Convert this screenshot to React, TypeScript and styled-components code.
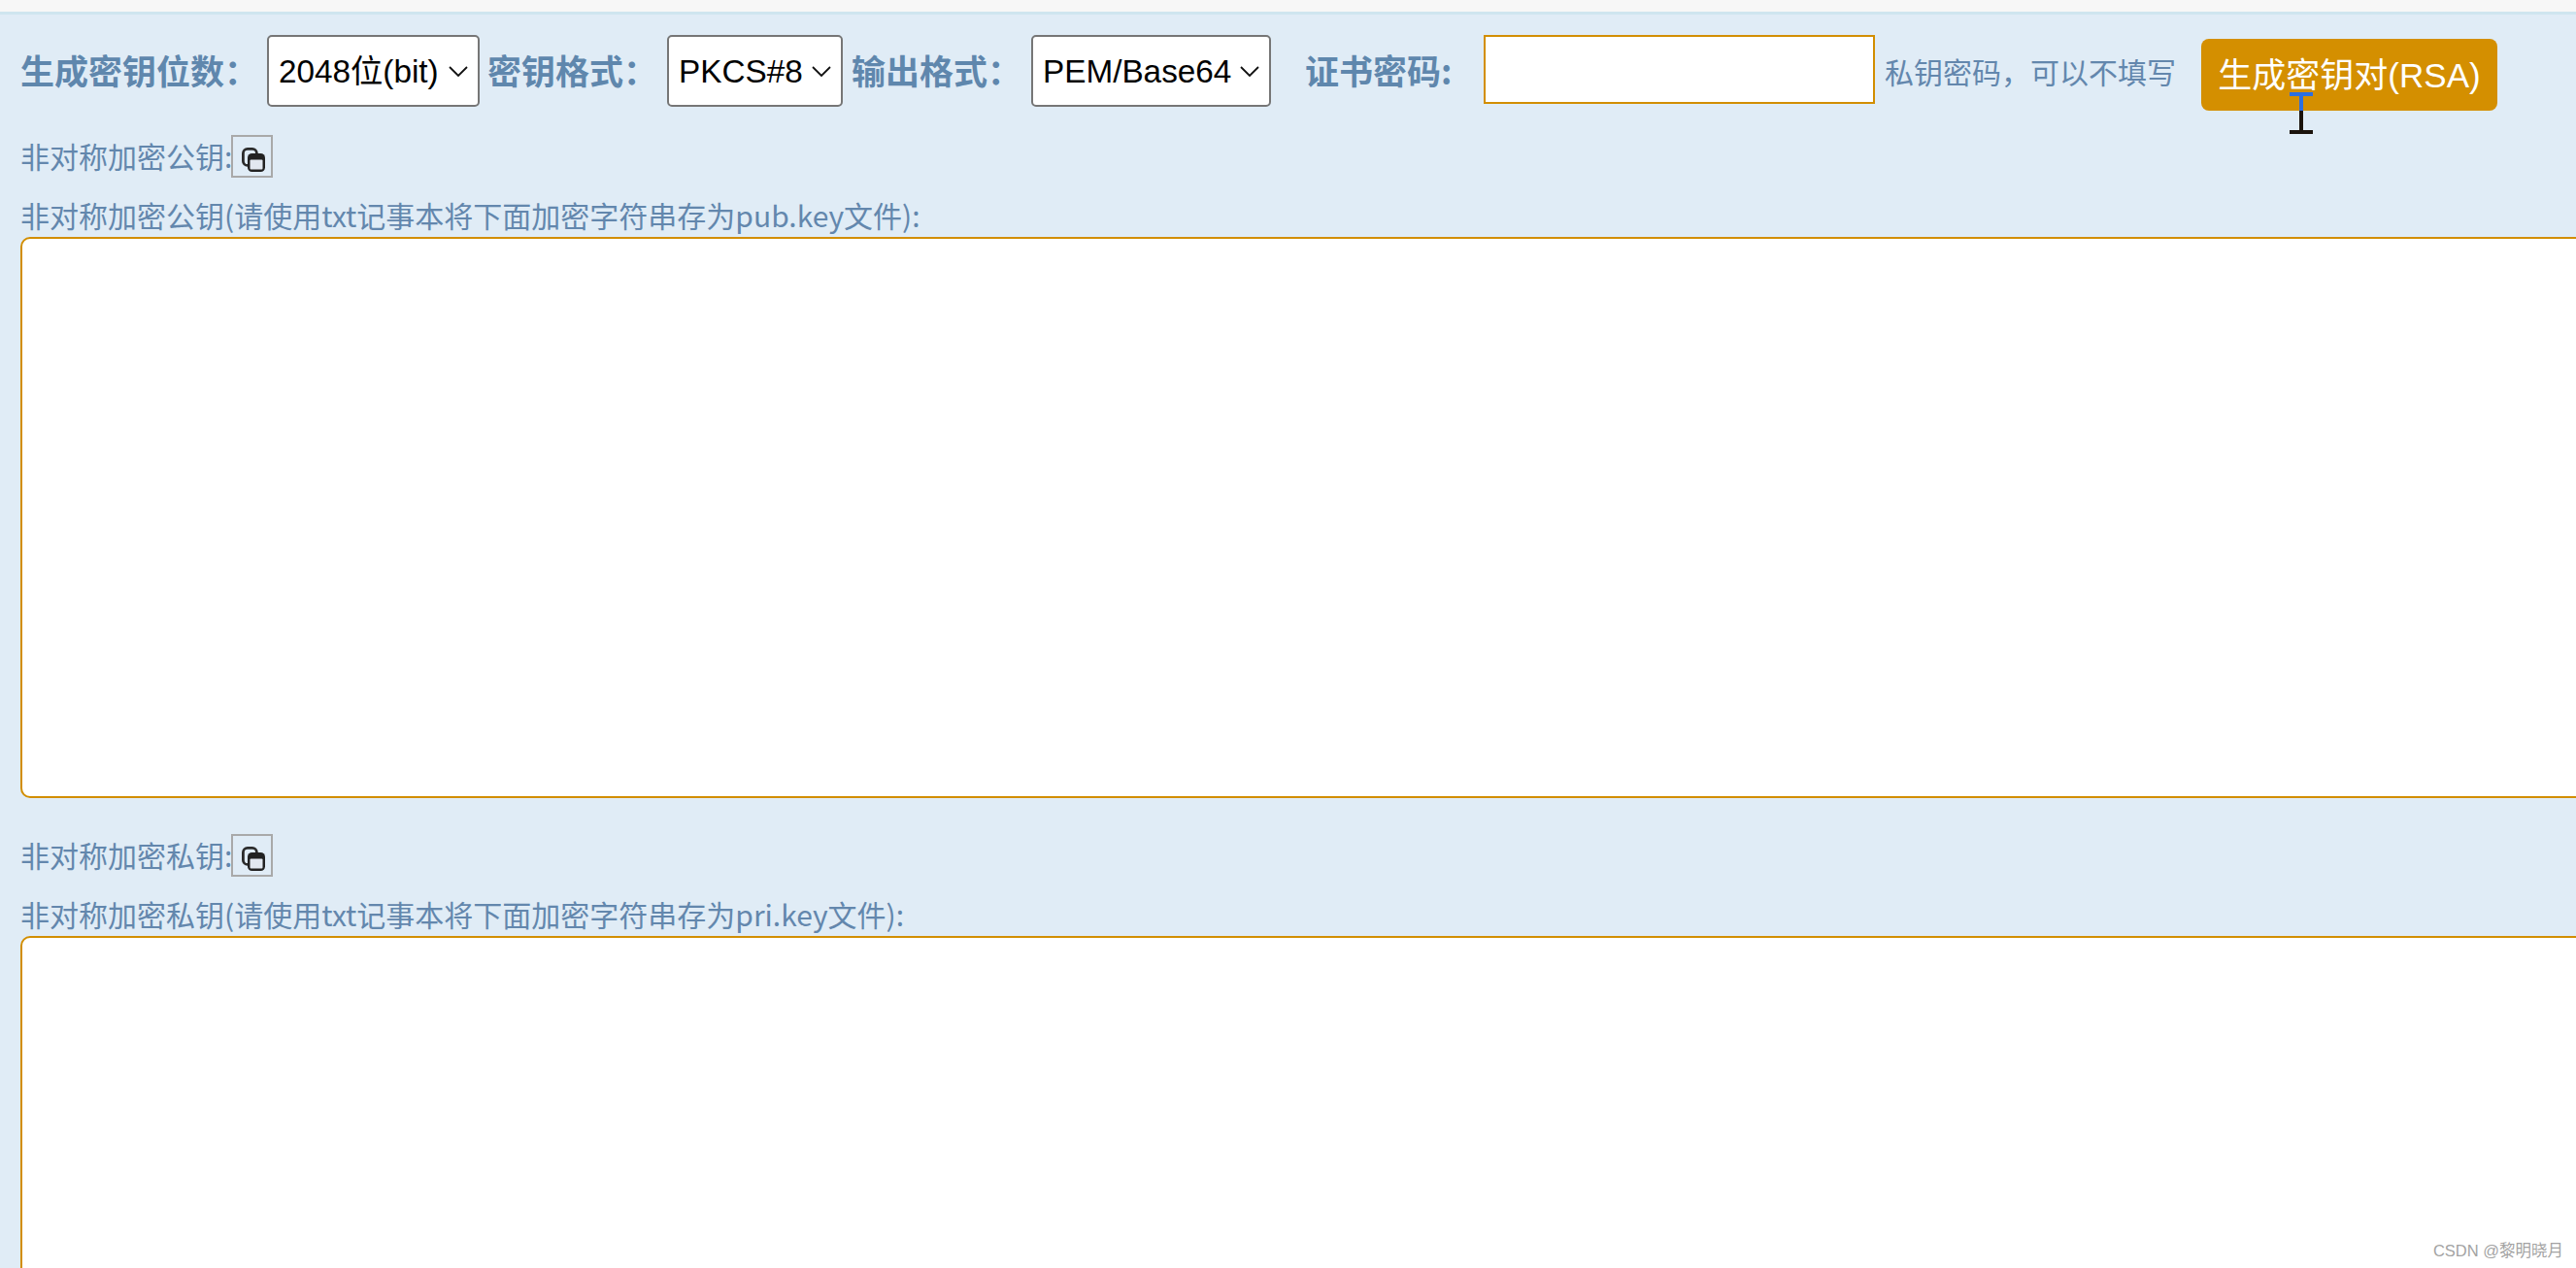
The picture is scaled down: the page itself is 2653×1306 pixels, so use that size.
import React from "react";
import styled, { createGlobalStyle } from "styled-components";

const Global = createGlobalStyle`
  html, body { margin: 0; padding: 0; background: #e0ecf6; overflow: hidden; }
`;

const Page = styled.div`
  position: relative;
  width: 2653px;
  height: 1306px;
  overflow: hidden;
  background: #e0ecf6;
  color: #6387ad;
  font-family: "Noto Sans CJK SC", "Noto Sans", sans-serif;
`;

const TopStrip = styled.div`
  height: 12px;
  background: #f7f7f7;
  border-bottom: 3px solid #cfe5ef;
`;

const Content = styled.div`
  padding: 21px 0 0 21px;
  width: 2800px;
`;

const Toolbar = styled.div`
  display: flex;
  align-items: flex-start;
  height: 103px;
`;

const FieldLabel = styled.label<{ $w: number; $ml?: number }>`
  flex: none;
  width: ${(p) => p.$w}px;
  margin-left: ${(p) => p.$ml ?? 0}px;
  height: 74px;
  line-height: 72px;
  font-size: 35px;
  font-weight: 700;
  color: #5f87ad;
  white-space: nowrap;
`;

const chevron = encodeURIComponent(
  '<svg xmlns="http://www.w3.org/2000/svg" width="20" height="11" viewBox="0 0 20 11"><path d="M1 1l9 9 9-9" fill="none" stroke="#111" stroke-width="1.8"/></svg>'
);

const Select = styled.select<{ $w: number }>`
  flex: none;
  box-sizing: border-box;
  width: ${(p) => p.$w}px;
  height: 74px;
  padding: 0 32px 0 10px;
  appearance: none;
  background: #fff url("data:image/svg+xml,${chevron}") no-repeat right 10px center;
  border: 2px solid #767676;
  border-radius: 5px;
  color: #000;
  font-family: "Liberation Sans", "Noto Sans CJK SC", sans-serif;
  font-size: 33.3px;
`;

const PasswordInput = styled.input`
  flex: none;
  box-sizing: border-box;
  width: 403px;
  height: 71px;
  padding: 0 10px;
  background: #fff;
  border: 2px solid #d28e00;
  outline: none;
`;

const Hint = styled.span`
  flex: none;
  width: 326px;
  margin-left: 10px;
  height: 76px;
  line-height: 74px;
  font-size: 30px;
  white-space: nowrap;
`;

const GenerateButton = styled.button`
  flex: none;
  box-sizing: border-box;
  width: 305px;
  height: 74px;
  margin-top: 4px;
  padding: 0 0 5px;
  background: #d48f00;
  border: none;
  border-radius: 8px;
  color: #fff;
  font-family: "Liberation Sans", "Noto Sans CJK SC", sans-serif;
  font-size: 35px;
  white-space: nowrap;
`;

const CopyRow = styled.div`
  display: flex;
  align-items: flex-start;
  height: 44px;
  font-size: 30px;
  line-height: 43px;
  white-space: nowrap;
`;

const CopyButton = styled.button`
  flex: none;
  box-sizing: border-box;
  display: flex;
  align-items: center;
  justify-content: center;
  width: 43px;
  height: 44px;
  margin-left: -1px;
  padding: 7px 0 0 3px;
  background: transparent;
  border: 2px solid #a9a9a9;
`;

const Caption = styled.div`
  margin-top: 17px;
  height: 44px;
  font-size: 30px;
  line-height: 42px;
  white-space: nowrap;
`;

const KeyArea = styled.textarea<{ $h: number; $mb?: number }>`
  display: block;
  box-sizing: border-box;
  width: 2760px;
  height: ${(p) => p.$h}px;
  margin: 0 0 ${(p) => p.$mb ?? 0}px;
  padding: 8px;
  background: #fff;
  border: 2px solid #d28e00;
  border-radius: 10px;
  outline: none;
  resize: none;
`;

const Cursor = styled.svg`
  position: absolute;
  left: 2358px;
  top: 95px;
`;

const Watermark = styled.div`
  position: absolute;
  right: 13px;
  top: 1278px;
  font-size: 16.5px;
  line-height: 20px;
  color: #a3a3a3;
  font-family: "Liberation Sans", "Noto Sans CJK SC", sans-serif;
  white-space: nowrap;
`;

const CopyIcon = () => (
  <svg width="24" height="25" viewBox="0 0 24 25" aria-hidden="true">
    <rect x="1.4" y="1.4" width="14" height="17" rx="4.5" fill="none" stroke="#2b2b2b" strokeWidth="2.8" />
    <rect x="6" y="6" width="18" height="19" rx="4.5" fill="#222" />
    <rect x="8.5" y="12.5" width="13" height="10" rx="1" fill="#e2e8f0" />
  </svg>
);

export default function App() {
  return (
    <Page>
      <Global />
      <TopStrip />
      <Content>
        <Toolbar>
          <FieldLabel $w={254}>生成密钥位数：</FieldLabel>
          <Select $w={219} defaultValue="2048">
            <option value="2048">2048位(bit)</option>
          </Select>
          <FieldLabel $w={185} $ml={8}>密钥格式：</FieldLabel>
          <Select $w={181} defaultValue="pkcs8">
            <option value="pkcs8">PKCS#8</option>
          </Select>
          <FieldLabel $w={185} $ml={9}>输出格式：</FieldLabel>
          <Select $w={247} defaultValue="pem">
            <option value="pem">PEM/Base64</option>
          </Select>
          <FieldLabel $w={184} $ml={35}>证书密码:</FieldLabel>
          <PasswordInput type="text" />
          <Hint>私钥密码，可以不填写</Hint>
          <GenerateButton>生成密钥对(RSA)</GenerateButton>
        </Toolbar>
        <CopyRow>
          非对称加密公钥:
          <CopyButton aria-label="复制公钥"><CopyIcon /></CopyButton>
        </CopyRow>
        <Caption>非对称加密公钥(请使用txt记事本将下面加密字符串存为pub.key文件):</Caption>
        <KeyArea $h={578} $mb={37} />
        <CopyRow>
          非对称加密私钥:
          <CopyButton aria-label="复制私钥"><CopyIcon /></CopyButton>
        </CopyRow>
        <Caption>非对称加密私钥(请使用txt记事本将下面加密字符串存为pri.key文件):</Caption>
        <KeyArea $h={600} />
      </Content>
      <Cursor width="24" height="43" viewBox="0 0 24 43" aria-hidden="true">
        <rect x="0" y="0" width="24" height="4" fill="#2c6fe0" />
        <rect x="10" y="4" width="4" height="15" fill="#2c6fe0" />
        <rect x="10" y="19" width="4" height="20" fill="#1b130c" />
        <rect x="0" y="39" width="24" height="4" fill="#1b130c" />
      </Cursor>
      <Watermark>CSDN @黎明晓月</Watermark>
    </Page>
  );
}
